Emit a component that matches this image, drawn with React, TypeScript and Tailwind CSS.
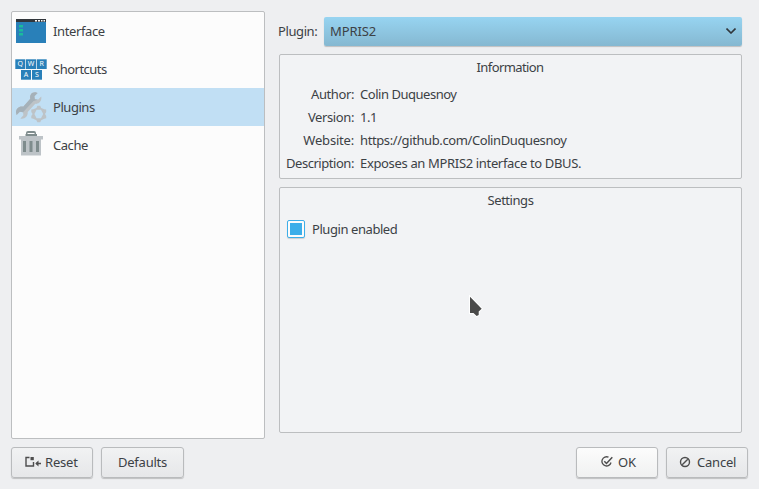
import type { ReactNode } from "react";

function InterfaceIcon() {
  return (
    <svg width="32" height="32" viewBox="0 0 32 32">
      <rect x="1" y="4" width="30" height="24" fill="#2980b9" />
      <rect x="1" y="4" width="30" height="3" fill="#31363b" />
      <path d="M20 5h2v1.500h-2zM23 5h2v1.500h-2zM26 5h1.500v1.500h-1.500zM28.500 5h1.500v1.500h-1.500z" fill="#fcfcfc" />
      <path d="M4 10h4v2.500H4zM4 14h4v2.500H4zM4 18h4v2.500H4z" fill="#1abc9c" />
    </svg>
  );
}

const KEYS: [number, number, string][] = [
  [0.3, 6.3, "Q"],
  [11, 6.3, "W"],
  [21.7, 6.3, "R"],
  [6, 17, "A"],
  [17, 17, "S"],
];

function ShortcutsIcon() {
  return (
    <svg width="32" height="32" viewBox="0 0 32 32">
      {KEYS.map(([x, y, k]) => (
        <g key={k}>
          <rect x={x} y={y} width="10" height="9.700" fill="#2980b9" />
          <text x={x + 4.8} y={y + 7} textAnchor="middle" fontSize="7" fill="#fcfcfc" fontFamily="Noto Sans, sans-serif">
            {k}
          </text>
        </g>
      ))}
    </svg>
  );
}

function PluginsIcon() {
  return (
    <svg width="32" height="32" viewBox="0 0 32 32">
      <path
        d="M20.500 1.200C16.500 1 14.500 4 15.300 7.800L8.200 15.800C4.500 14.800 1 17.600 1 21.500L1.600 24L4.800 20.800L8 21.200L8.400 24.300L5.400 27.500C9.700 28.500 13.200 25.200 12.700 21L20.300 12.800C24 13.500 27.200 9.500 26.200 5.600L23 8.700L19.800 8.200L19.400 5.300L22.600 2Z"
        fill="#bdc3c7"
      />
      <path
        d="M20.500 1.200C16.500 1 14.500 4 15.300 7.800L8.200 15.800C4.500 14.800 1 17.600 1 21.500L1.600 24L4.800 20.800L8 21.200L18.500 10L23 8.700L19.800 8.200L19.400 5.300L22.600 2Z"
        fill="#a5b1b9"
      />
      <path
        d="M22.400 14.800H25.200L26.200 17L29.300 18.200L31.200 18.600V21L30 23L31.200 25V27.300L29.300 27.700L26.200 29.200L25.200 31.200H22.400L21.400 29.200L18.300 27.700L16.300 27.300V25L17.600 23L16.300 21V18.600L18.300 18.200L21.400 17Z"
        fill="#bdc3c7"
      />
      <path d="M21.600 18.800H26L28.200 23L26 27.200H21.600L19.400 23Z" fill="#c1dff4" />
    </svg>
  );
}

function CacheIcon() {
  return (
    <svg width="32" height="32" viewBox="0 0 32 32">
      <path d="M11 6V4Q11 2 13 2H19Q21 2 21 4V6H19.500V4H12.500V6Z" fill="#7f8c8d" />
      <path d="M4 7H28V10.500H26V26.500H6V10.500H4Z" fill="#bdc3c7" />
      <rect x="10.500" y="5" width="11.500" height="2" fill="#7f8c8d" />
      <path d="M8 12H11V23H8zM14.500 12H17.500V23H14.500zM21 12H24V23H21z" fill="#7f8c8d" />
    </svg>
  );
}

function ResetIcon() {
  return (
    <svg width="16" height="16" viewBox="0 0 16 16" fill="none" stroke="#4d4d4d">
      <path d="M4.500 3.500H1V12H8.500V8" strokeWidth="1.400" />
      <path d="M5.500 3h3.300v3.200H5.500z" fill="#4d4d4d" stroke="none" />
      <path d="M11 9.500H16" strokeWidth="1.500" />
      <path d="M13.500 6.500L10.300 9.500L13.500 12.500Z" fill="#4d4d4d" stroke="none" />
    </svg>
  );
}

function OkIcon() {
  return (
    <svg width="12" height="12" viewBox="0 0 12 12" fill="none" stroke="#4d4d4d" strokeWidth="1.300">
      <path d="M7.500 1.200A4.600 4.600 0 1 0 10 6.500" />
      <path d="M3.300 5.200L5.500 7.500L11.300 1.300" strokeWidth="1.500" />
    </svg>
  );
}

function CancelIcon() {
  return (
    <svg width="12" height="12" viewBox="0 0 12 12" fill="none" stroke="#4d4d4d" strokeWidth="1.400">
      <circle cx="6" cy="6" r="4.500" />
      <path d="M3.200 8.800L8.800 3.200" />
    </svg>
  );
}

function Row({ icon, active, children }: { icon: ReactNode; active?: boolean; children: ReactNode }) {
  return (
    <div className={`flex h-[38px] items-center gap-[6px] pl-[3px] ${active ? "bg-[#c1dff4]" : ""}`}>
      {icon}
      {children}
    </div>
  );
}

function Field({ label, children }: { label: ReactNode; children: ReactNode }) {
  return (
    <div className="flex h-[23px] items-center">
      <div className="flex w-[74px] shrink-0 justify-end">{label}</div>
      <div className="ml-[6px]">{children}</div>
    </div>
  );
}

function Button({ className, children }: { className: string; children: ReactNode }) {
  return (
    <button
      className={`flex h-[31px] items-center rounded-[3px] border border-[#b9bbbd] bg-linear-to-b pb-[2px] shadow-[0_1px_1px_rgba(0,0,0,0.2)] ${className}`}
    >
      {children}
    </button>
  );
}

export default function App() {
  return (
    <div className="flex h-[489px] w-[759px] flex-col overflow-hidden bg-[#eeeff1] px-[11px] pt-[11px] font-['Noto_Sans',sans-serif] text-[13px] leading-[18px] tracking-[-0.4px] whitespace-nowrap text-[#3c4145]">
      <div className="flex h-[428px]">
        <div className="w-[254px] rounded-[2px] border border-[#bcbec0] bg-[#fcfcfc]">
          <Row icon={<InterfaceIcon />}><span className="tracking-[-0.38px]">Interface</span></Row>
          <Row icon={<ShortcutsIcon />}><span className="tracking-[-0.5px]">Shortcuts</span></Row>
          <Row icon={<PluginsIcon />} active><span className="tracking-[-0.45px]">Plugins</span></Row>
          <Row icon={<CacheIcon />}><span className="tracking-[-0.45px]">Cache</span></Row>
        </div>
        <div className="ml-[13px] w-[465px] pt-[6px]">
          <div className="flex h-[29px] items-center">
            <span className="w-[46px] pb-[2px]">Plugin:</span>
            <div className="flex h-[29px] w-[418px] items-center justify-between rounded-[2px] bg-linear-to-b from-[#97d4f1] to-[#85b8d1] pr-[6px] pb-[2px] pl-[6px] shadow-[0_1px_1px_rgba(0,0,0,0.2)]">
              <span className="tracking-[-0.1px]">MPRIS2</span>
              <svg width="10" height="6" viewBox="0 0 10 6" fill="none" stroke="#31363b" strokeWidth="1.600">
                <path d="M0.500 0.500L5 5L9.500 0.500" />
              </svg>
            </div>
          </div>
          <div className="mt-[8px] ml-px h-[125px] w-[463px] rounded-[2px] border border-[#bcbec0] bg-[#f2f3f5]">
            <div className="flex h-[27px] items-center justify-center pr-px pb-[3px]"><span className="tracking-[-0.6px]">Information</span></div>
            <Field label={<span>Author:</span>}><span className="tracking-[-0.47px]">Colin Duquesnoy</span></Field>
            <Field label={<span>Version:</span>}><span>1.1</span></Field>
            <Field label={<span className="tracking-[-0.2px]">Website:</span>}><span>https://github.com/ColinDuquesnoy</span></Field>
            <Field label={<span className="tracking-[-0.45px]">Description:</span>}><span className="tracking-[-0.34px]">Exposes an MPRIS2 interface to DBUS.</span></Field>
          </div>
          <div className="relative mt-[8px] ml-px h-[246px] w-[463px] rounded-[2px] border border-[#bcbec0] bg-[#f2f3f5]">
            <div className="flex h-[27px] items-center justify-center pb-[4px]"><span className="tracking-[-0.45px]">Settings</span></div>
            <div className="mt-[4px] flex h-[19px] items-center gap-[7px] pl-[7px]">
              <div className="h-[18px] w-[18px] rounded-[2px] border border-[#3daee9] bg-[#fcfcfc] p-[2px] shadow-[0_1px_1px_rgba(0,0,0,0.15)]">
                <div className="h-full w-full bg-[#3daee9]" />
              </div>
              <span className="tracking-[-0.43px]">Plugin enabled</span>
            </div>
            <svg className="absolute top-[107px] left-[188px]" width="16" height="24" viewBox="0 0 16 24">
              <path
                d="M2 1.800L13.700 13.700L10.700 16.500V20L8.700 21L5.500 18H2Z"
                fill="#4a4a4a"
                stroke="#fff"
                strokeWidth="2"
                paintOrder="stroke"
              />
            </svg>
          </div>
        </div>
      </div>
      <div className="mt-[8px] flex">
        <Button className="w-[82px] from-[#f1f2f3] to-[#e6e7e9] pl-[13px]"><ResetIcon /><span className="ml-[4px] tracking-[-0.2px]">Reset</span></Button>
        <Button className="ml-[8px] w-[83px] justify-center from-[#f1f2f3] to-[#e6e7e9]"><span className="tracking-[-0.25px]">Defaults</span></Button>
        <Button className="ml-auto w-[82px] from-[#fcfcfc] to-[#f0f1f1] pl-[24px]"><OkIcon /><span className="ml-[5px] tracking-[-0.1px]">OK</span></Button>
        <Button className="ml-[8px] w-[82px] from-[#f1f2f3] to-[#e6e7e9] pl-[12px]"><CancelIcon /><span className="ml-[6px] tracking-[-0.2px]">Cancel</span></Button>
      </div>
    </div>
  );
}
